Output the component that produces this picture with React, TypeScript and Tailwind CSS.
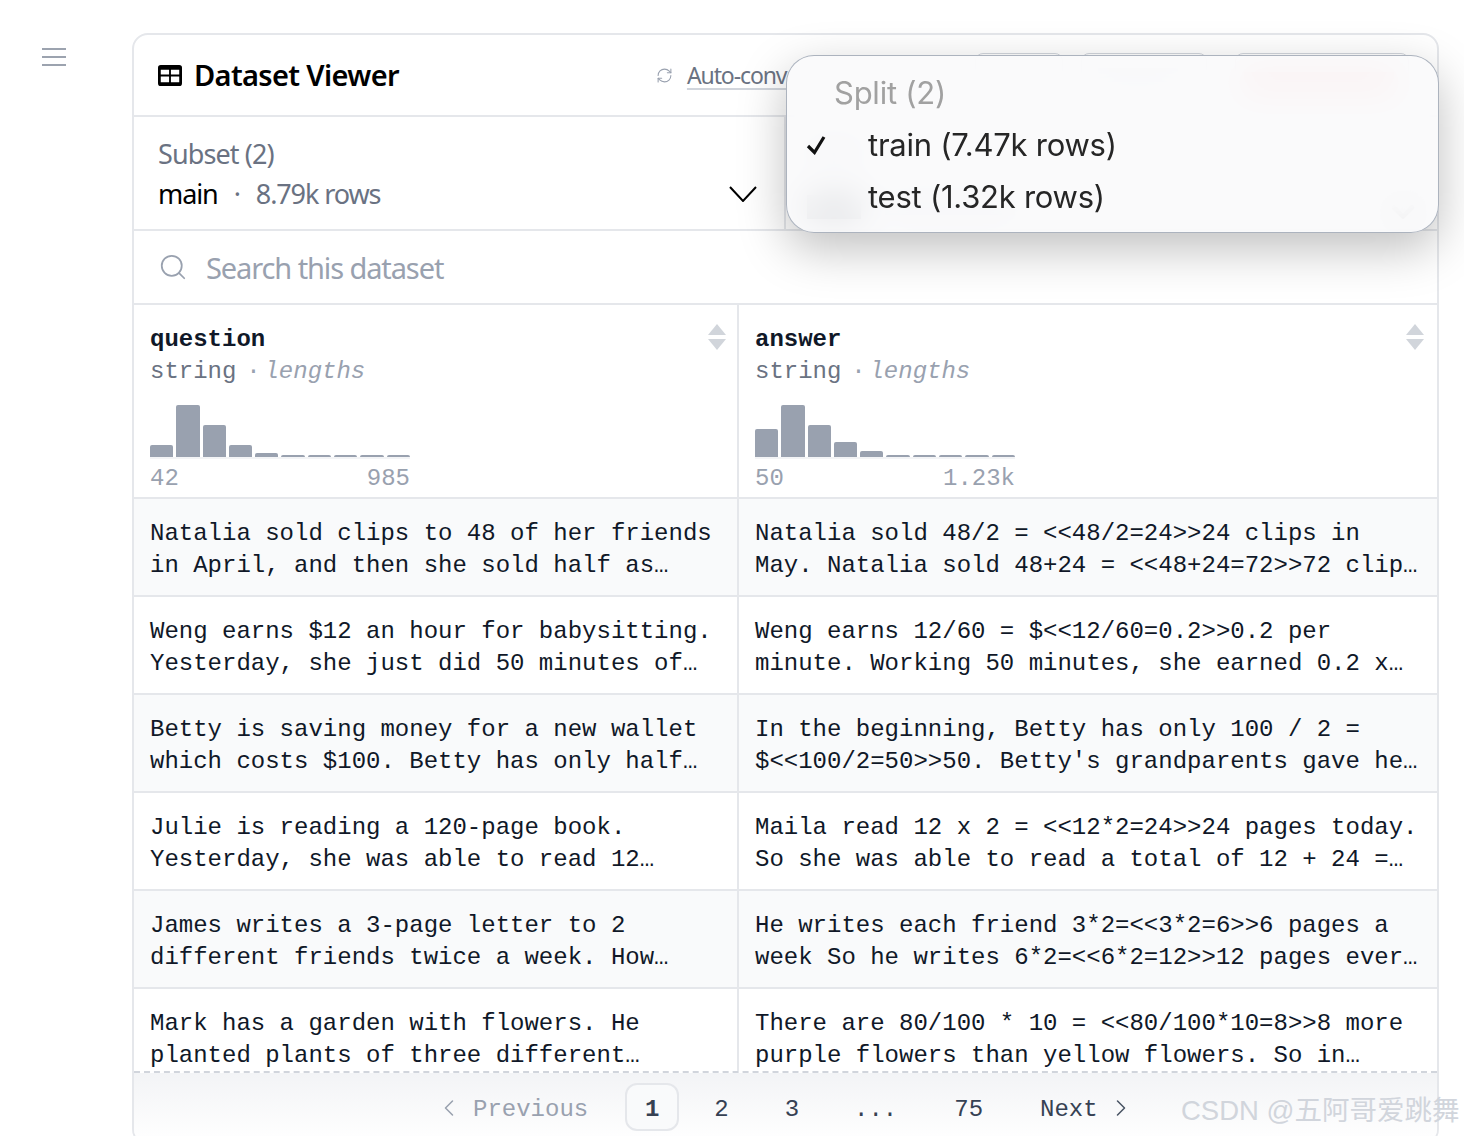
import React from 'react'
import { ChevronDown, ChevronLeft, ChevronRight, Search, RefreshCw } from 'lucide-react'

const mono = "font-['Liberation_Mono','DejaVu_Sans_Mono',monospace]"

const rows = [
  ['Natalia sold clips to 48 of her friends in April, and then she sold half as…', 'Natalia sold 48/2 = <<48/2=24>>24 clips in May. Natalia sold 48+24 = <<48+24=72>>72 clip…'],
  ['Weng earns $12 an hour for babysitting. Yesterday, she just did 50 minutes of…', 'Weng earns 12/60 = $<<12/60=0.2>>0.2 per minute. Working 50 minutes, she earned 0.2 x…'],
  ['Betty is saving money for a new wallet which costs $100. Betty has only half…', "In the beginning, Betty has only 100 / 2 = $<<100/2=50>>50. Betty's grandparents gave he…"],
  ['Julie is reading a 120-page book. Yesterday, she was able to read 12…', 'Maila read 12 x 2 = <<12*2=24>>24 pages today. So she was able to read a total of 12 + 24 =…'],
  ['James writes a 3-page letter to 2 different friends twice a week. How…', 'He writes each friend 3*2=<<3*2=6>>6 pages a week So he writes 6*2=<<6*2=12>>12 pages ever…'],
  ['Mark has a garden with flowers. He planted plants of three different…', 'There are 80/100 * 10 = <<80/100*10=8>>8 more purple flowers than yellow flowers. So in…'],
]

function SortArrows() {
  return (
    <svg width="18" height="26" viewBox="0 0 18 26" className="shrink-0">
      <path d="M9 0 L18 11 H0 Z" fill="#d1d5db" />
      <path d="M0 15 H18 L9 26 Z" fill="#d1d5db" />
    </svg>
  )
}

function Histogram({ bars }: { bars: number[] }) {
  return (
    <div className="w-[260px] border-b-2 border-gray-100 flex items-end gap-[3px] h-[54px]">
      {bars.map((h, i) => (
        <div key={i} className="flex-1 bg-gray-400 rounded-t-[2px]" style={{ height: h }} />
      ))}
    </div>
  )
}

function ColumnHead({ name, min, max, bars, className }: { name: string; min: string; max: string; bars: number[]; className: string }) {
  return (
    <div className={`${className} h-[194px] pl-4 pt-[19px] border-b-2 border-gray-200 relative`}>
      <div className="flex justify-between">
        <div>
          <div className="font-bold text-gray-900 leading-8">{name}</div>
          <div className="text-gray-500 leading-8 flex">
            <span>string</span>
            <span className="text-gray-400 w-[28px] text-center pl-[6px]">·</span>
            <i className="text-gray-400">lengths</i>
          </div>
        </div>
        <div><SortArrows /></div>
      </div>
      <div className="mt-[17px]"><Histogram bars={bars} /></div>
      <div className="w-[260px] flex justify-between text-gray-400 leading-8 mt-[4px]">
        <span>{min}</span>
        <span>{max}</span>
      </div>
    </div>
  )
}

function Cell({ text, className }: { text: string; className: string }) {
  return (
    <div className={`${className} h-[98px] pl-4 pr-4 pt-[6px] flex items-center border-b-2 border-gray-200`}>
      <div className="text-gray-900 leading-8">{text}</div>
    </div>
  )
}

function Pagination() {
  return (
    <div className="absolute left-0 right-0 bottom-0 h-[72px] pt-[10px] border-t-2 border-dashed border-gray-300 bg-gradient-to-b from-gray-100 to-white text-gray-700 pl-[301px]">
      <div className="flex items-center h-[48px]">
        <ChevronLeft className="w-7 h-7 mt-[2px] text-gray-400 mr-[10px]" strokeWidth={1.3} />
        <span className="pt-[6px] text-gray-400">Previous</span>
        <span className="ml-[37px] w-[54px] h-[48px] pt-[6px] rounded-xl border-2 border-gray-200 bg-gray-50 flex items-center justify-center font-bold">1</span>
        <span className="pt-[6px] ml-[35px]">2</span>
        <span className="pt-[6px] ml-[56px]">3</span>
        <span className="pt-[6px] ml-[55px]">...</span>
        <span className="pt-[6px] ml-[57px]">75</span>
        <span className="pt-[6px] ml-[57px]">Next</span>
        <ChevronRight className="w-7 h-7 mt-[2px] text-gray-600 ml-[9px]" strokeWidth={1.3} />
      </div>
    </div>
  )
}

function SplitMenu() {
  return (
    <div className="absolute left-[786px] top-[55px] w-[653px] h-[178px] rounded-[28px] border border-gray-400/80 bg-[#f9fafb]/90 backdrop-blur-lg shadow-[0_16px_48px_rgba(0,0,0,0.25)] font-['Inter',sans-serif] text-[31px] tracking-[-0.25px] leading-[52px] text-neutral-800 pt-[11px]">
      <div className="pl-[47px] text-neutral-400">Split (2)</div>
      <div className="flex items-center">
        <svg width="22" height="20" viewBox="0 0 22 20" className="ml-[19px] mr-[40px]">
          <path d="M2 11 L8.5 17.5 L18 2" fill="none" stroke="#111" strokeWidth="3.2" />
        </svg>
        <span>train (7.47k rows)</span>
      </div>
      <div className="pl-[81px]">test (1.32k rows)</div>
    </div>
  )
}

export default function App() {
  return (
    <div className="relative h-[1136px] overflow-hidden bg-white flex items-start">
      <div className="w-[132px] shrink-0 pt-[48px] pl-[42px]">
        <svg width="24" height="18" viewBox="0 0 24 18" className="block">
          <path d="M0 1 H24 M0 9 H24 M0 17 H24" fill="none" stroke="#9ca3af" strokeWidth="2" />
        </svg>
      </div>

      <div className="relative mt-[33px] w-[1307px] h-[1112px] rounded-2xl border-2 border-gray-200 overflow-hidden font-['Noto_Sans',sans-serif]">
        <div className="h-[82px] border-b-2 border-gray-200 flex items-center pl-[24px] whitespace-nowrap">
          <svg width="24" height="21" viewBox="0 0 26 22" preserveAspectRatio="none" className="mr-[12px]">
            <path fillRule="evenodd" d="M3 0h20a3 3 0 0 1 3 3v16a3 3 0 0 1-3 3H3a3 3 0 0 1-3-3V3a3 3 0 0 1 3-3Zm0 5v5h9V5H3Zm11 0v5h9V5h-9ZM3 12v6h9v-6H3Zm11 0v6h9v-6h-9Z" fill="#000" />
          </svg>
          <span className="text-[29px] font-semibold tracking-[-0.65px] text-black">Dataset Viewer</span>
          <RefreshCw className="w-[17px] h-[17px] ml-[257px] text-gray-400" strokeWidth={1.5} />
          <span className="ml-[14px] w-[100px] text-[23px] tracking-[-1.1px] text-gray-500 underline decoration-2 decoration-gray-300 underline-offset-4">Auto-conv</span>
          <div className="w-[88px] h-[44px] rounded-lg border border-gray-300 ml-[188px]" />
          <div className="w-[126px] h-[44px] rounded-lg border border-gray-300 ml-[18px] pt-[14px] pl-4">
            <div className="w-[80px] h-[14px] bg-gray-200" />
          </div>
          <div className="w-[174px] h-[44px] rounded-lg border border-gray-300 ml-[28px] pt-[18px] pl-2">
            <div className="w-[150px] h-[20px] bg-red-300" />
          </div>
        </div>

        <div className="h-[114px] border-b-2 border-gray-200 flex">
          <div className="w-[652px] pl-[24px] pr-[27px] pt-[17px] border-r-2 border-gray-200">
            <div className="text-[27px] tracking-[-0.9px] text-gray-500 leading-[40px]">Subset (2)</div>
            <div className="flex items-center text-[27px] tracking-[-1.1px] leading-[40px]">
              <span className="text-black">main</span>
              <span className="text-gray-500 ml-4">·</span>
              <span className="text-gray-500 ml-4">8.79k rows</span>
              <svg width="28" height="16" viewBox="0 0 28 16" className="ml-auto">
                <path d="M1 1 L14 15 L27 1" fill="none" stroke="#000" strokeWidth="2" />
              </svg>
            </div>
          </div>
          {/* second select sits behind the open menu, only its blur shows */}
          <div className="flex-1 pl-[21px] pr-[16px] pt-[27px]">
            <div className="w-[54px] h-[18px] bg-gray-300" />
            <div className="flex items-center mt-[22px]">
              <div className="w-[54px] h-[24px] bg-gray-800" />
              <div className="w-[130px] h-[16px] ml-6 bg-gray-300" />
              <ChevronDown className="w-[36px] h-[36px] mt-[10px] ml-auto text-black" strokeWidth={3} />
            </div>
          </div>
        </div>

        <div className="h-[74px] border-b-2 border-gray-200 flex items-center pl-[24px]">
          <Search className="w-[30px] h-[30px] text-gray-400" strokeWidth={1.4} />
          <span className="ml-[18px] pt-[1px] text-[29px] tracking-[-1.1px] text-gray-400">Search this dataset</span>
        </div>

        <div className={`${mono} text-[24px] grid grid-cols-[605px_1fr]`}>
          <ColumnHead name="question" min="42" max="985" bars={[12, 52, 32, 12, 4, 2, 2, 2, 2, 2]} className="pr-[11px] border-r-2 border-r-gray-200" />
          <ColumnHead name="answer" min="50" max="1.23k" bars={[28, 52, 32, 15, 6, 2, 2, 2, 2, 2]} className="pr-[13px]" />
          {rows.map((r, i) => {
            const stripe = i % 2 === 0 ? 'bg-gray-50' : 'bg-white'
            return (
              <React.Fragment key={i}>
                <Cell text={r[0]} className={`${stripe} border-r-2 border-r-gray-200`} />
                <Cell text={r[1]} className={stripe} />
              </React.Fragment>
            )
          })}
        </div>

        <div className={`${mono} text-[24px]`}>
          <Pagination />
        </div>
      </div>

      <SplitMenu />

      <div className="absolute left-[1181px] top-[1091px] text-[27.5px] leading-[40px] text-gray-300 font-['Liberation_Sans','Noto_Sans_CJK_SC',sans-serif] whitespace-nowrap">CSDN @五阿哥爱跳舞</div>
    </div>
  )
}
